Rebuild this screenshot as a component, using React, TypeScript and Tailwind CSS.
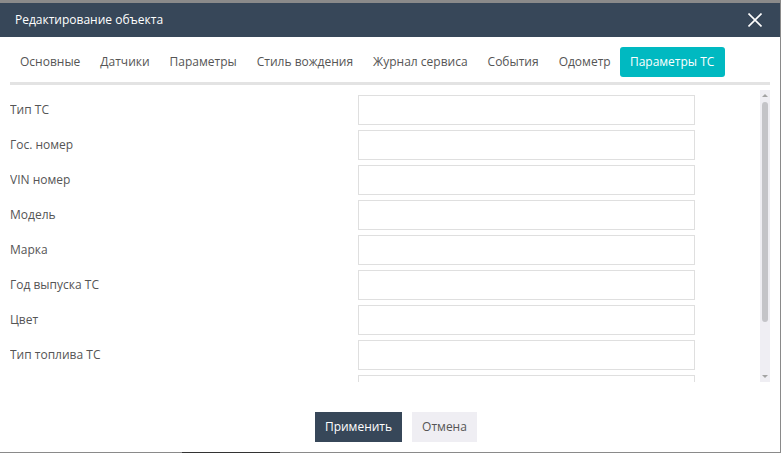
const FIELDS = ['Тип ТС', 'Гос. номер', 'VIN номер', 'Модель', 'Марка', 'Год выпуска ТС', 'Цвет', 'Тип топлива ТС', ''];

const TABS = ['Основные', 'Датчики', 'Параметры', 'Стиль вождения', 'Журнал сервиса', 'События', 'Одометр'];

export default function App() {
  return (
    <div className="h-[453px] w-[781px] overflow-hidden bg-[#8a8a8a] font-['Open_Sans',sans-serif] text-[12px] text-[#555]">
      {/* Page behind the dialog */}
      <div className="flex h-[3px] items-start">
        <div className="ml-[90px] h-[2px] w-[4px] bg-[#333]" />
        <div className="ml-[120px] h-[2px] w-[5px] bg-[#444]" />
        <div className="ml-[45px] h-[3px] w-px bg-[#333]" />
        <div className="ml-[108px] h-[2px] w-[4px] bg-[#333]" />
        <div className="ml-[120px] h-[2px] w-[5px] bg-[#444]" />
        <div className="ml-[72px] h-[3px] w-px bg-[#333]" />
        <div className="ml-[262px] h-[2px] w-[5px] bg-[#444]" />
      </div>

      <div className="flex h-[449px] w-[780px] flex-col bg-white">
        {/* Header */}
        <header className="flex h-[34px] shrink-0 items-center justify-between bg-[#374759] pl-[15px] pr-[18px] text-white">
          <span>Редактирование объекта</span>
          <svg width="14" height="14" viewBox="0 0 14 14" fill="none" stroke="white" strokeWidth="1.6">
            <path d="M0.5 0.5L13.5 13.5M13.5 0.5L0.5 13.5" />
          </svg>
        </header>

        {/* Tabs */}
        <nav className="mx-[10px] flex h-[48px] shrink-0 items-start border-b-[3px] border-[#e3e3e3] pt-[10px]">
          {TABS.map(tab => (
            <span key={tab} className="flex h-[30px] items-center px-[10px]">{tab}</span>
          ))}
          <span className="-ml-px flex h-[30px] w-[105px] items-center justify-center rounded-[3px] bg-[#00b9c1] font-medium text-white">Параметры ТС</span>
        </nav>

        {/* Form */}
        <div className="relative mx-[10px] mt-[5px] h-[292px] shrink-0 overflow-hidden">
          <div className="flex flex-col gap-[5px] pt-[5px]">
            {FIELDS.map((field, i) => (
              <div key={i} className="flex h-[30px] shrink-0 items-start">
                <span className="w-[348px] leading-[30px]">{field}</span>
                <div className="h-[30px] w-[337px] border border-[#dfdfdf] bg-white" />
              </div>
            ))}
          </div>
          <div className="absolute right-0 top-0 flex h-full w-[10px] flex-col items-center justify-between bg-[#efeef3] py-[4px]">
            <div className="h-0 w-0 border-x-[3px] border-b-[3px] border-x-transparent border-b-[#a3a3a3]" />
            <div className="absolute left-[2px] top-[12px] h-[220px] w-[6px] rounded-full bg-[#c4c4c8]" />
            <div className="h-0 w-0 border-x-[3px] border-t-[3px] border-x-transparent border-t-[#a3a3a3]" />
          </div>
        </div>

        {/* Footer */}
        <div className="flex flex-1 items-start justify-center gap-[10px] pl-[12px] pt-[30px]">
          <button className="h-[30px] w-[87px] bg-[#374759] font-medium text-white">Применить</button>
          <button className="h-[30px] w-[65px] bg-[#efeef3] text-[#555]">Отмена</button>
        </div>
      </div>

      <div className="ml-[182px] h-px w-[98px] bg-[#333]" />
    </div>
  );
}
